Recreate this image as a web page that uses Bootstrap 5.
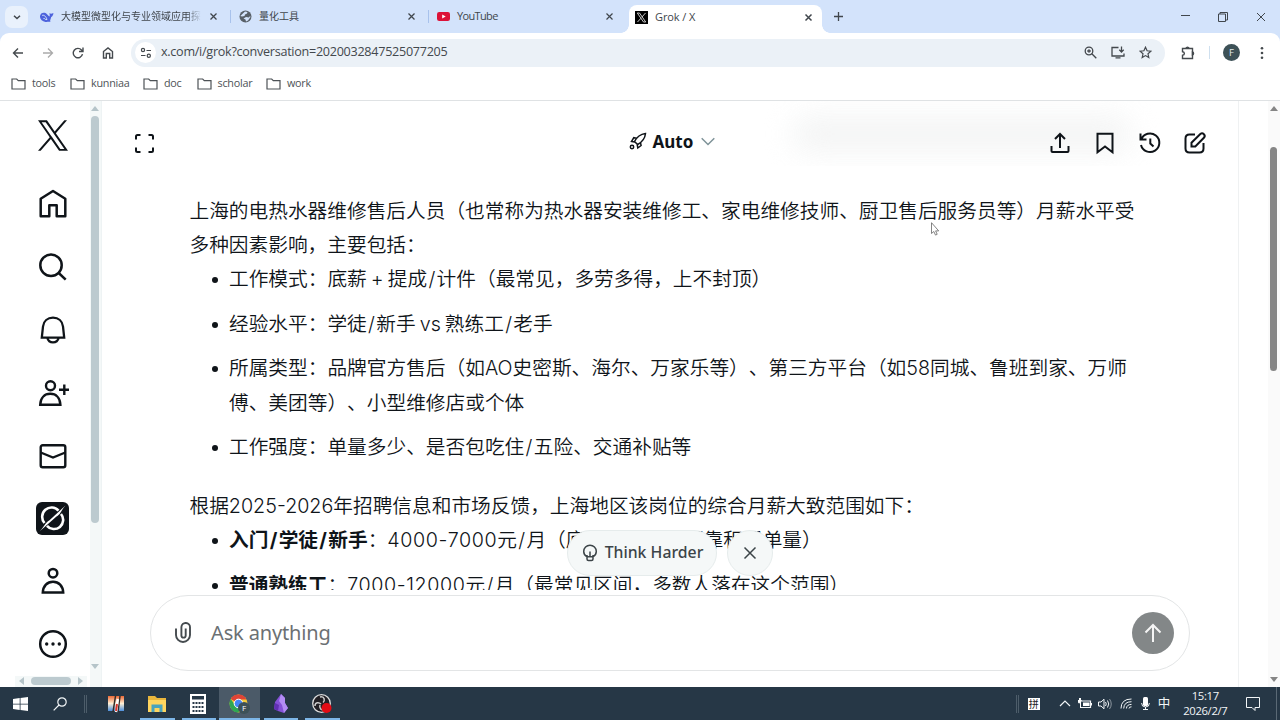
<!DOCTYPE html>
<html lang="zh-CN">
<head>
<meta charset="utf-8">
<title>Grok / X</title>
<meta name="viewport" content="width=device-width, initial-scale=1">
<link href="https://cdn.jsdelivr.net/npm/bootstrap@5.3.0/dist/css/bootstrap.min.css" rel="stylesheet">
<style>
body{width:1280px;height:720px;overflow:hidden;background:#fff;color:#0f1419;font-family:"Open Sans","Noto Sans CJK SC",sans-serif}
svg{display:block;flex:none}
.ln{fill:none;stroke:currentColor}
.tabstrip{height:33px;background:#d3e3fb;color:#40464c;font-size:11px;letter-spacing:-.1px;flex:none}
.menu-btn{width:23px;height:22px;border-radius:7px;background:#e9f1fc;margin-left:5px}
.tab{width:198px;height:33px;padding:0 11px 0 9px;position:relative}
.tab .title{white-space:nowrap;flex:1}
.tab .zh{font-size:10px;letter-spacing:0}
.tab .yt{letter-spacing:-.65px}
.tab.divided::after{content:"";position:absolute;right:-2px;top:10px;width:1px;height:13px;background:#a8c2ec}
.tab.fade-end .title{-webkit-mask-image:linear-gradient(90deg,#000 90%,transparent)}
.tab.current{background:#fff;border-radius:8px 8px 0 0;height:28px;margin:5px 0 0 4px;align-self:flex-start;width:193px;padding:0 9px 4px 6px}
.tab.current::before,.tab.current::after{content:"";position:absolute;bottom:0;width:8px;height:8px}
.tab.current::before{left:-8px;background:radial-gradient(circle at 0 0,transparent 7.5px,#fff 8px)}
.tab.current::after{right:-8px;background:radial-gradient(circle at 100% 0,transparent 7.5px,#fff 8px)}
.toolbar-wrap{background:#d3e3fb;flex:none}
.toolbar{height:38px;background:#fff;border-radius:9px 9px 0 0;color:#454a4e;padding:1px 10px 0 10px}
.omni{height:28px;border-radius:14px;background:#ebf1f7;width:1034px;padding:0 13px 0 4px;font-size:12.6px;letter-spacing:-.28px;color:#43484d}
.site{width:21px;height:21px;border-radius:50%;background:#fff}
.avatar{width:17px;height:17px;border-radius:50%;background:#3d5157;color:#e4eef2;font-size:9.5px;line-height:17px;text-align:center}
.marks{height:30px;border-bottom:1px solid #dfe2e4;font-size:10.8px;letter-spacing:-.25px;color:#4d5256;padding:0 11px 4px;flex:none}
.marks div{gap:6px}
.page-area{height:586px;flex:none}
.rail{width:90px;padding-left:15px}
.rail .slot{height:62.85px;width:75px;flex:none}
.rail .slot:first-child{height:69px;margin-bottom:3px}
.hbar{height:11px;width:72px;background:#f4f8f8;padding:0 4px}
.hbar i{width:40px;height:8px;border-radius:4px;background:#bccacf}
.tri-l,.tri-r{border:4px solid transparent}
.tri-l{border-right:5px solid #b5c4c9;border-left:0}
.tri-r{border-left:5px solid #b5c4c9;border-right:0}
.tri-u,.tri-d{width:0;height:0;border:4px solid transparent}
.tri-u{border-bottom:5px solid #b5c4c9;border-top:0}
.tri-d{border-top:5px solid #b5c4c9;border-bottom:0}
.vbar{width:12px;background:#f4f8f8;border-right:1px solid #eef3f4;padding:5px 1px 18px 0}
.vbar .thumb{width:8px;height:407px;border-radius:4px;background:#bccacf;margin-top:5px}
.main-col{width:1137px;border-right:1px solid #eff1f2;position:relative}
.chat-head{height:65px;padding:0 31px 0 32px;position:relative;overflow:hidden;flex:none}
.haze{position:absolute;left:690px;top:14px;width:340px;height:38px;background:#f3f4f4;filter:blur(14px);opacity:.9;border-radius:20px}
.haze~*{position:relative}
.mode{margin-left:473.5px;font:700 17px "Noto Sans",sans-serif;gap:6px;width:90px}
.head-icons{gap:21px;margin-left:auto}
.chat{height:424px;overflow:hidden;padding:27.5px 0 0 87.5px;flex:none}
.answer{width:949px;font-family:Inter,"Noto Sans CJK SC",sans-serif;font-weight:350;font-size:19.69px;line-height:34.45px;text-spacing-trim:space-all}
.answer p{margin:0}
.answer ul{margin:0 0 24px;padding-left:39.5px;list-style:none}
.answer li{margin-bottom:10px;position:relative;word-spacing:-1.5px}
.answer li:last-child{margin-bottom:0}
.answer li::before{content:"";position:absolute;left:-17px;top:15px;width:6px;height:6px;border-radius:50%;background:#0f1419}
.answer b{font-weight:700}
.answer .sl{padding:0 1.3px}
.answer .num{letter-spacing:.6px}
.floaters{position:absolute;left:465px;top:429px;gap:10px;font:500 15.8px "Noto Sans",sans-serif;color:#3c4448}
.floaters>div{height:46px;border-radius:23px;background:#f5f8f8;border:1px solid #e6ecec}
.think{width:150px;gap:7px;padding-left:1px}
.think span{margin-top:-2px}
.dismiss{width:46px}
.composer{margin:5px 0 0 48px;width:1040px;height:76px;border:1px solid #e3e5e6;border-radius:38px;padding:0 15px 0 22px;font:400 20px "Noto Sans",sans-serif;color:#6b7073}
.ask{margin:-2px 0 0 18px;letter-spacing:-.15px}
.send{width:42px;height:42px;border-radius:50%;background:#838788;color:#f5f5f5}
.page-bar{width:12px;background:#fafafa;padding:5px 1px 5px 0;margin-left:auto}
.page-bar .tri-u{border-bottom-color:#858585}
.page-bar .tri-d{border-top-color:#858585}
.page-bar .thumb{width:7px;height:224px;border-radius:4px;background:#858585;margin-top:36px}
.pointer{position:absolute;left:829px;top:121px}
.task{height:33px;background:#263746;color:#f2f5f7;flex:1;padding-left:8px}
.task .app{width:41.3px;height:33px;position:relative}
.task .run::after{content:"";position:absolute;left:4px;right:3px;bottom:0;height:2px;background:#7db6e8}
.task .front{background:#4b5a68}
.task .front::after{left:0;right:0}
.sep{width:3px;height:18px;border:solid #4d5d6a;border-width:0 1px}
.clock{font-size:11.3px;line-height:15px;text-align:center;width:54px;letter-spacing:-.35px;margin-top:-1px}
.pin{width:12px;height:12px;background:#fff;color:#222;font-size:10px;line-height:12px;text-align:center}
</style>
</head>
<body class="d-flex flex-column">
<div class="tabstrip d-flex align-items-center">
  <div class="menu-btn d-flex align-items-center justify-content-center"><svg width="8" height="8" viewBox="0 0 8 8" class="ln" stroke-width="1.5"><path d="M1 2.7 4 5.5 7 2.7"/></svg></div>
  <div class="tab divided fade-end d-flex align-items-center" style="margin-left:3px">
    <svg width="14" height="12" viewBox="0 0 14 12" style="margin:0 7px 0 0"><path d="M0 5C.5 2 3 1 5.500 2 7 2.500 8 5 9.500 5.500 10 4.500 9.500 3.500 9.500 2c1 1 2 .8 3.900 0-.1 2-1 3.500-2.200 4C11 8 9.500 9.500 10.500 11 8 10.500 7.500 11.300 5.500 11 2 10.500-.3 8 0 5Z" fill="#4d62dc"/><path d="M2 4.500c2-1 4 1 5 4-2 .8-2-1.500-3.500-1" fill="none" stroke="#d3e3fb"/></svg>
    <span class="title zh">大模型微型化与专业领域应用探</span>
    <svg width="9" height="9" viewBox="0 0 9 9" class="ln ms-2" stroke-width="1.3"><path d="m1.500 1.500 6 6m0-6-6 6"/></svg>
  </div>
  <div class="tab divided d-flex align-items-center">
    <svg width="13" height="13" viewBox="0 0 13 13" style="margin:0 7px 0 1px"><circle cx="6.500" cy="6.500" r="6" fill="#586068"/><path d="M6 1.500 8.500 2 8 3.500 6 4.500 5.500 6 3 6.500 1.300 6M7 7l3 .5 1-1.500.5 1L9 10.500l-2 1-.5-2-2-1Z" fill="#d3e3fb"/></svg>
    <span class="title zh">量化工具</span>
    <svg width="9" height="9" viewBox="0 0 9 9" class="ln" stroke-width="1.3"><path d="m1.500 1.500 6 6m0-6-6 6"/></svg>
  </div>
  <div class="tab d-flex align-items-center">
    <svg width="13" height="9" viewBox="0 0 13 9" style="margin:0 7px 0 1px"><rect width="13" height="9" rx="2.200" fill="#dc1238"/><path d="m5.200 2.500 3.500 2-3.500 2Z" fill="#fff"/></svg>
    <span class="title yt">YouTube</span>
    <svg width="9" height="9" viewBox="0 0 9 9" class="ln" stroke-width="1.2"><path d="m1.500 1.500 6 6m0-6-6 6"/></svg>
  </div>
  <div class="tab current d-flex align-items-center">
    <svg width="13" height="13" viewBox="0 0 13 13" style="margin-right:7px"><path d="M0 0h13v13H0z"/><path d="m2.300 2 6.200 9h2.200l-6.200-9ZM10.500 2l-3.800 4.300M6 7.200 2.500 11" fill="none" stroke="#ddd" stroke-width=".9"/></svg>
    <span class="title">Grok / X</span>
    <svg width="9" height="9" viewBox="0 0 9 9" class="ln" stroke-width="1.5"><path d="m1.500 1.500 6 6m0-6-6 6"/></svg>
  </div>
  <svg width="11" height="11" viewBox="0 0 11 11" class="ln" stroke-width="1.300" style="margin-left:11px"><path d="M5.500 1v9M1 5.500h9"/></svg>
  <div class="d-flex align-items-center ms-auto" style="gap:28px;margin-right:14px">
    <svg width="9" height="9" viewBox="0 0 9 9" class="ln"><path d="M0 3.500h9"/></svg>
    <svg width="10" height="10" viewBox="0 0 10 10" class="ln"><path d="M.5 2h7v7.500h-7ZM2 2V.5h7.500V8h-2"/></svg>
    <svg width="10" height="10" viewBox="0 0 10 10" class="ln"><path d="m1 1 8 8m0-8L1 9"/></svg>
  </div>
</div>
<div class="toolbar-wrap"><div class="toolbar d-flex align-items-center">
  <svg width="16" height="16" viewBox="0 0 16 16" class="ln" stroke-width="1.400"><path d="M13 8H3.500M8 3.500 3.500 8 8 12.500"/></svg>
  <svg width="16" height="16" viewBox="0 0 16 16" class="ln" stroke-width="1.300" style="margin-left:14px;color:#aaa"><path d="M3 8h9.500M8 3.500 12.500 8 8 12.500"/></svg>
  <svg width="16" height="16" viewBox="0 0 16 16" class="ln" stroke-width="1.400" style="margin-left:14px"><path d="M12.500 9.200A4.700 4.700 0 1 1 11.500 5L13 6.300M13 2.500v4H9"/></svg>
  <svg width="16" height="16" viewBox="0 0 16 16" class="ln" stroke-width="1.400" style="margin-left:14px"><path d="M3.500 6.500 8 3l4.500 3.500V13H9.700V8.500H6.300V13H3.500Z"/></svg>
  <div class="omni d-flex align-items-center" style="margin-left:15px">
    <div class="site d-flex align-items-center justify-content-center"><svg width="12" height="12" viewBox="0 0 12 12" class="ln" stroke-width="1.200"><circle cx="3" cy="3" r="1.600"/><path d="M6.500 3.500H11M1 8.500h4.500"/><circle cx="8.800" cy="8.800" r="1.600"/></svg></div>
    <span style="margin-left:5px">x.com/i/grok?conversation=2020032847525077205</span>
    <div class="d-flex align-items-center ms-auto" style="gap:14px">
      <svg width="13" height="13" viewBox="0 0 13 13" class="ln" stroke-width="1.300"><circle cx="5" cy="5" r="3.800"/><path d="m7.800 7.800 4.500 4.500M5 3.200v3.600M3.200 5h3.600"/></svg>
      <svg width="14" height="13" viewBox="0 0 14 13" class="ln" stroke-width="1.300"><path d="M7.500 1.500H1v8.500h12V7.500M4.500 11.800h5M10.500.5v5M8.300 3.800l2.200 2.200 2.200-2.200"/></svg>
      <svg width="13" height="13" viewBox="0 0 13 13" class="ln" stroke-width="1.200"><path d="m6.500 1.200 1.600 3.600 3.800.4-2.900 2.600.8 3.800-3.300-2-3.300 2 .8-3.800L1.100 5.200l3.800-.4Z"/></svg>
    </div>
  </div>
  <svg width="14" height="14" viewBox="0 0 14 14" class="ln" stroke-width="1.400" style="margin-left:16px"><path d="M1.500 2.500h10v10h-10V9.300C4 9 4 6 1.500 5.700Z"/><path d="M5 2.300a1.600 1.600 0 0 1 3 0ZM11.500 6a1.600 1.600 0 0 1 0 3Z" fill="currentColor"/></svg>
  <i style="width:1px;height:13px;background:#cfe0ef;margin-left:14px"></i>
  <div class="avatar" style="margin-left:13px">F</div>
  <svg width="4" height="14" viewBox="0 0 4 14" fill="#454a4e" style="margin-left:20px"><circle cx="2" cy="2.300" r="1.300"/><circle cx="2" cy="7" r="1.300"/><circle cx="2" cy="11.700" r="1.300"/></svg>
</div></div>
<div class="marks d-flex align-items-center">
  <div class="d-flex align-items-center" style="width:59px"><svg width="15" height="12" viewBox="0 0 15 12" class="ln" stroke-width="1.200"><path d="M1 1h4.700l1.600 1.600H14V11H1Z"/></svg>tools</div>
  <div class="d-flex align-items-center" style="width:73px"><svg width="15" height="12" viewBox="0 0 15 12" class="ln" stroke-width="1.200"><path d="M1 1h4.700l1.600 1.600H14V11H1Z"/></svg>kunniaa</div>
  <div class="d-flex align-items-center" style="width:53.500px"><svg width="15" height="12" viewBox="0 0 15 12" class="ln" stroke-width="1.200"><path d="M1 1h4.700l1.600 1.600H14V11H1Z"/></svg>doc</div>
  <div class="d-flex align-items-center" style="width:69.500px"><svg width="15" height="12" viewBox="0 0 15 12" class="ln" stroke-width="1.200"><path d="M1 1h4.700l1.600 1.600H14V11H1Z"/></svg>scholar</div>
  <div class="d-flex align-items-center"><svg width="15" height="12" viewBox="0 0 15 12" class="ln" stroke-width="1.200"><path d="M1 1h4.700l1.600 1.600H14V11H1Z"/></svg>work</div>
</div>
<div class="page-area d-flex">
  <nav class="rail d-flex flex-column">
    <div class="slot d-flex align-items-center justify-content-center"><svg width="30" height="31" viewBox="0 0 1200 1227" fill="#0f1419"><path d="M714.163 519.284L1160.890 0H1055.030L667.137 450.887L357.328 0H0L468.492 681.821L0 1226.370H105.866L515.491 750.218L842.672 1226.370H1200L714.137 519.284ZM569.165 687.828L521.697 619.934L144.011 79.694H306.615L611.412 515.685L658.880 583.579L1055.080 1150.300H892.476L569.165 687.854Z"/></svg></div>
    <div class="slot d-flex align-items-center justify-content-center"><svg width="32" height="32" viewBox="0 0 32 32" class="ln" stroke-width="2.500"><path d="M3.700 10.700 16 3l12.300 7.700v17.600h-8.600v-11h-7.400v11H3.700Z" stroke-linejoin="round"/></svg></div>
    <div class="slot d-flex align-items-center justify-content-center"><svg width="32" height="32" viewBox="0 0 32 32" class="ln" stroke-width="2.500"><circle cx="14" cy="14.300" r="10.700"/><path d="m21.700 22 7 6.700"/></svg></div>
    <div class="slot d-flex align-items-center justify-content-center"><svg width="32" height="32" viewBox="0 0 32 32" class="ln" stroke-width="2.300"><path d="M4.800 23.700 6 12.500C6.600 7 10.600 3.700 16 3.700s9.400 3.300 10 8.800l1.200 11.200ZM10.300 23.700c.8 3.300 3 4.700 5.700 4.700s4.900-1.400 5.700-4.700"/></svg></div>
    <div class="slot d-flex align-items-center justify-content-center"><svg width="32" height="32" viewBox="0 0 32 32" class="ln" stroke-width="2.400"><circle cx="13.500" cy="8.700" r="4.500"/><path d="M3.200 27.700C3.500 21 7.500 16.800 13.300 16.800S23.100 21 23.400 27.700ZM22 12.700h10.600M27.300 7.400V18"/></svg></div>
    <div class="slot d-flex align-items-center justify-content-center"><svg width="32" height="32" viewBox="0 0 32 32" class="ln" stroke-width="2.400"><rect x="3.700" y="5.200" width="24.600" height="22" rx="2"/><path d="m3.700 12.500 12.300 5 12.300-5"/></svg></div>
    <div class="slot d-flex align-items-center justify-content-center"><svg width="33" height="33" viewBox="0 0 33 33"><rect width="33" height="33" rx="6" fill="#0f1419"/><path d="M22.500 8.700A9 9 0 0 0 8.500 21M11 23.800A9 9 0 0 0 25 12" fill="none" stroke="#fff" stroke-width="2.600"/><path d="M3.500 29.500C8 25 9 21 13.500 18.200L29.500 3.500C25 8.500 25 12 20.500 14.500Z" fill="#fff"/></svg></div>
    <div class="slot d-flex align-items-center justify-content-center"><svg width="32" height="32" viewBox="0 0 32 32" class="ln" stroke-width="2.500"><circle cx="16" cy="8.200" r="4.300"/><path d="M5.800 27.500C6.100 20.800 10.300 16.700 16 16.700S25.900 20.800 26.200 27.500Z"/></svg></div>
    <div class="slot d-flex align-items-center justify-content-center"><svg width="32" height="32" viewBox="0 0 32 32" class="ln" stroke-width="2.500"><circle cx="16" cy="16" r="12.800"/><g fill="#0f1419" stroke="none"><circle cx="9.700" cy="16" r="1.700"/><circle cx="16" cy="16" r="1.700"/><circle cx="22.300" cy="16" r="1.700"/></g></svg></div>
    <div class="hbar d-flex align-items-center justify-content-between"><span class="tri-l"></span><i></i><span class="tri-r"></span></div>
  </nav>
  <div class="vbar d-flex flex-column align-items-center"><span class="tri-u"></span><div class="thumb"></div><span class="tri-d mt-auto"></span></div>
  <main class="main-col d-flex flex-column">
    <header class="chat-head d-flex align-items-center">
      <div class="haze"></div>
      <svg width="21" height="21" viewBox="0 0 21 21" class="ln" stroke-width="2" style="margin-top:19px"><path d="M2 6.500V3.500Q2 2 3.500 2h3M14.500 2h3Q19 2 19 3.500v3M19 14.500v3q0 1.500-1.500 1.500h-3M6.500 19h-3Q2 19 2 17.500v-3"/></svg>
      <div class="mode d-flex align-items-center" style="margin-top:15px">
        <svg width="18" height="18" viewBox="0 0 18 18" class="ln" stroke-width="1.500"><path d="M5.500 9.500Q9 2.500 16.500 1.500 15.800 8.500 8.700 12.500ZM7.500 6.300 4.800 5.700 2.500 9.500l3 .4M11.500 10.700l.6 2.800L8.800 16l-.6-3.300"/><circle cx="3" cy="15" r="1.700"/></svg>
        <span>Auto</span>
        <svg width="14" height="9" viewBox="0 0 14 9" class="ln" stroke-width="1.500" style="color:#7f9399;margin-left:2px"><path d="m.7 1.200 6.300 6.300 6.300-6.300"/></svg>
      </div>
      <div class="head-icons d-flex align-items-center" style="margin-top:19px">
        <svg width="24" height="24" viewBox="0 0 24 24" class="ln" stroke-width="2"><path d="M12 17V3.500M7 8l5-5 5 5M3.500 15v5q0 1 1 1h15q1 0 1-1v-5"/></svg>
        <svg width="24" height="24" viewBox="0 0 24 24" class="ln" stroke-width="2"><path d="M4.500 2.700h15v18.600L12 15.500l-7.500 5.800Z"/></svg>
        <svg width="24" height="24" viewBox="0 0 24 24" class="ln" stroke-width="2"><path d="M3.300 8.500A9.300 9.300 0 1 1 3 14M2.500 2.500v6h6M12.300 7.500v5l3.200 3"/></svg>
        <svg width="24" height="24" viewBox="0 0 24 24" class="ln" stroke-width="2"><path d="M12 3.500H6.500q-4 0-4 4v10q0 4 4 4h10q4 0 4-4V12M8.500 15.500v-3.800L17.300 3q1.900-1.500 3.600.2t0 3.500L12.300 15.500Z"/></svg>
      </div>
    </header>
    <section class="chat"><div class="answer">
      <p>上海的电热水器维修售后人员（也常称为热水器安装维修工、家电维修技师、厨卫售后服务员等）月薪水平受多种因素影响，主要包括：</p>
      <ul>
        <li>工作模式：底薪 + 提成<span class="sl">/</span>计件（最常见，多劳多得，上不封顶）</li>
        <li>经验水平：学徒<span class="sl">/</span>新手 vs 熟练工<span class="sl">/</span>老手</li>
        <li>所属类型：品牌官方售后（如AO史密斯、海尔、万家乐等）、第三方平台（如58同城、鲁班到家、万师傅、美团等）、小型维修店或个体</li>
        <li>工作强度：单量多少、是否包吃住<span class="sl">/</span>五险、交通补贴等</li>
      </ul>
      <p>根据2025-2026年招聘信息和市场反馈，上海地区该岗位的综合月薪大致范围如下：</p>
      <ul>
        <li><b>入门<span class="sl">/</span>学徒<span class="sl">/</span>新手</b>：<span class="num">4000-7000</span>元<span class="sl">/</span>月（底薪偏低，主要靠积累单量）</li>
        <li><b>普通熟练工</b>：<span class="num">7000-12000</span>元<span class="sl">/</span>月（最常见区间，多数人落在这个范围）</li>
      </ul>
    </div></section>
    <div class="floaters d-flex">
      <div class="think d-flex align-items-center justify-content-center"><svg width="16" height="18" viewBox="0 0 16 18" class="ln" stroke-width="1.500"><path d="M5 12.800C2.800 11.500 1.700 9.700 1.700 7.500a6.300 6.300 0 0 1 12.600 0c0 2.200-1.100 4-3.300 5.300M5 11v4q0 1.500 1.500 1.500h3Q11 16.500 11 15v-4M4.500 12.700h7M8 12.500V7.500"/></svg><span>Think Harder</span></div>
      <div class="dismiss d-flex align-items-center justify-content-center"><svg width="14" height="14" viewBox="0 0 14 14" class="ln" stroke-width="1.500"><path d="m1.500 1.500 11 11m0-11-11 11"/></svg></div>
    </div>
    <div class="composer d-flex align-items-center">
      <svg width="20" height="22" viewBox="0 0 20 22" class="ln" stroke-width="1.900" style="color:#454b4f"><path d="M3 6.500V13a7 7 0 0 0 14 0V5.500a4.300 4.300 0 0 0-8.600-.5v8.500a2 2 0 0 0 4.300 0V6.500"/></svg>
      <span class="ask">Ask anything</span>
      <div class="send ms-auto d-flex align-items-center justify-content-center"><svg width="18" height="20" viewBox="0 0 18 20" class="ln" stroke-width="2"><path d="M9 19V2M1.500 9.500 9 2l7.500 7.500"/></svg></div>
    </div>
    <svg class="pointer" width="9" height="14" viewBox="0 0 9 14"><path d="M.5.700v10.800l2.300-2 1.700 3.600 1.700-.8-1.600-3.400h3.100Z" fill="#fff" stroke="#666" stroke-width=".8"/></svg>
  </main>
  <div class="page-bar d-flex flex-column align-items-center"><span class="tri-u"></span><div class="thumb"></div><span class="tri-d mt-auto"></span></div>
</div>
<footer class="task d-flex align-items-center">
  <div class="d-flex align-items-center" style="width:90px">
    <svg width="15" height="14" viewBox="0 0 15 14" style="margin-left:5px"><path d="M0 2 6.700 1v5.700H0ZM7.500.900 15 0v6.700H7.500ZM0 7.500h6.700V13L0 12ZM7.500 7.500H15V14l-7.500-.9Z" fill="#fff"/></svg>
    <svg width="14" height="14" viewBox="0 0 14 14" class="ln" stroke-width="1.200" style="margin-left:25px"><circle cx="9" cy="5" r="4.200"/><path d="m6 8-5.300 5.300"/></svg>
    <i class="sep" style="margin-left:17px"></i>
  </div>
  <div class="app d-flex align-items-center justify-content-center" style="margin-left:-3px"><svg width="18" height="18" viewBox="0 0 18 18"><defs><linearGradient id="g" x2="0" y2="1"><stop stop-color="#ee6935"/><stop offset=".5" stop-color="#fff0d5"/><stop offset="1" stop-color="#4b8edc"/></linearGradient></defs><path d="M1 1h16v15H1z" fill="url(#g)"/><path d="M6 17 8.500 1M11 17l2-16" stroke="#322d29" stroke-width="1.500"/><path d="m9 17 1.800-13" stroke="#fff" stroke-width="2.500"/><path d="m9 16 1-7" stroke="#d7352b" stroke-width="2"/></svg></div>
  <div class="app run d-flex align-items-center justify-content-center"><svg width="20" height="18" viewBox="0 0 20 18"><path d="M1 1h7l2 2h9v14H1Z" fill="#e9b63c"/><path d="M1 5h18v12H1Z" fill="#ffd55f"/><path d="M4.500 17V9.500h11V17h-3v-4h-5v4Z" fill="#4aa3bd"/></svg></div>
  <div class="app run d-flex align-items-center justify-content-center"><svg width="16" height="20" viewBox="0 0 16 20"><path d="M0 0h16v20H0z" fill="#fff"/><path d="M2 2h12v3.500H2Z" fill="#263746"/><path d="M2.500 9h12M2.500 13h12M2.500 17h12" stroke="#263746" stroke-width="2" stroke-dasharray="2 1"/></svg></div>
  <div class="app run front d-flex align-items-center justify-content-center"><svg width="21" height="20" viewBox="0 0 21 20"><circle cx="9.500" cy="9.500" r="9" fill="#f6cb3b"/><path d="M9.500 9.500 1.700 5A9 9 0 0 1 17.500 5.500H9.500Z" fill="#df4436"/><path d="M1.700 5A9 9 0 0 0 9.500 18.500L12 12 6 11Z" fill="#2fa652"/><circle cx="9.500" cy="9.500" r="4.300" fill="#4285f4" stroke="#fff"/><circle cx="15" cy="14" r="6" fill="#3d5157"/><text x="15" y="17" font-size="8" text-anchor="middle" fill="#fff">F</text></svg></div>
  <div class="app run d-flex align-items-center justify-content-center"><svg width="15" height="19" viewBox="0 0 15 19"><path d="m8 0 4 4v5l3 5-4 5-6-2-4-2 1-7Z" fill="#8551d7"/><path d="m8 0-2 7 3 4 2 8 4-5-3-5V4Z" fill="#b28cf4"/><path d="m2 9 4 2-1 6-4-2Z" fill="#6130b3"/></svg></div>
  <div class="app run d-flex align-items-center justify-content-center"><svg width="20" height="20" viewBox="0 0 20 20"><circle cx="9.500" cy="9.500" r="8.800" fill="#211f24" stroke="#ddd" stroke-width="1.300"/><path d="M8 3c5-1 5 4 3 5.500M3 12c0-4 4-4 6-2M13 15c-4 2-6-1-5-4" fill="none" stroke="#ccc" stroke-width="1.500"/><circle cx="14.500" cy="14" r="5" fill="#e30b14"/></svg></div>
  <i class="sep" style="margin-left:673px"></i>
  <div class="d-flex align-items-center" style="margin-left:9px">
    <span class="pin">拼</span>
    <svg width="12" height="7" viewBox="0 0 12 7" class="ln" stroke-width="1.200" style="margin-left:19px"><path d="m1 6 5-5 5 5"/></svg>
    <svg width="14" height="11" viewBox="0 0 14 11" style="margin-left:7px"><path d="M3.500 3h9v6.500H3" class="ln" stroke-width="1.200"/><path d="M5 4.500h6.500V8H5ZM13 5h1v2.500h-1ZM1 0v2H0v2.500q1.500 2 2 0V10h1V4.500L4 2H3V0Z" fill="#fff"/></svg>
    <svg width="14" height="12" viewBox="0 0 14 12" class="ln" style="margin-left:6px"><path d="M.5 4H3L6 1.200v9.600L3 8H.5ZM7.500 4q1.500 2 0 4M9.500 2.500q2.500 3.500 0 7"/><path d="M11.500 1q3.500 5 0 10" opacity=".5"/></svg>
    <svg width="12" height="11" viewBox="0 0 12 11" class="ln" style="margin-left:8px"><path d="M1 10.500Q1 1 11.500 1M3.700 10.500Q4 3.700 11.500 3.700M6.400 10.500Q6.700 6.400 11.500 6.400M9 10.500Q9 8.800 11.500 8.800"/></svg>
    <svg width="9" height="13" viewBox="0 0 9 13" style="margin-left:9px"><rect x="2" width="5" height="9" rx="1.500" fill="#fff"/><path d="M.6 6q0 4 3.900 4t3.900-4M4.500 10v3M2 12.500h5" class="ln"/></svg>
    <span style="margin-left:8px;font-size:12.500px;line-height:16px">中</span>
    <div class="clock" style="margin-left:8px"><div>15:17</div><div>2026/2/7</div></div>
    <svg width="14" height="14" viewBox="0 0 14 14" class="ln" style="margin-left:14px"><path d="M.5.5h13v10H9v3l-3-3H.5Z"/></svg>
  </div>
  <i class="align-self-stretch" style="width:1px;background:#5a6975;margin-left:16px"></i>
</footer>
<script src="https://cdn.jsdelivr.net/npm/bootstrap@5.3.0/dist/js/bootstrap.bundle.min.js"></script>
</body>
</html>
